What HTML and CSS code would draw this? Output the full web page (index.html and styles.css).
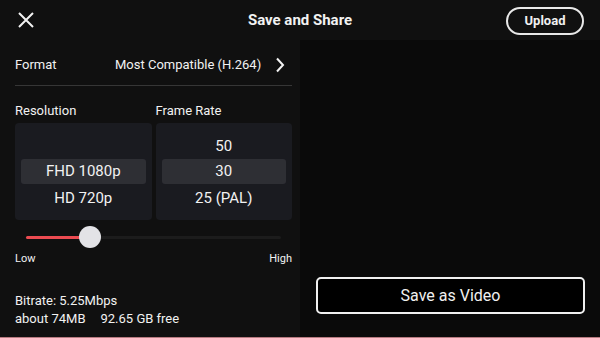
FILE: index.html
```html
<!DOCTYPE html>
<html lang="en">
<head>
    <meta charset="UTF-8">
    <meta name="viewport" content="width=device-width, initial-scale=1.0">
    <title>Save and Share</title>
    <link rel="stylesheet" href="styles.css">
</head>
<body>
    <div class="screen">
        <header class="top-bar">
            <button class="icon-btn" aria-label="Close">
                <svg width="16" height="16" viewBox="0 0 16 16">
                    <path d="M1 1 L15 15 M15 1 L1 15" stroke="#f2f2f2" stroke-width="2" fill="none"/>
                </svg>
            </button>
            <h1 class="title">Save and Share</h1>
            <button class="upload-btn">Upload</button>
        </header>

        <div class="main">
            <section class="settings">
                <div class="format-row">
                    <span class="label">Format</span>
                    <span class="format-value">Most Compatible (H.264)</span>
                    <svg class="chevron" width="10" height="16" viewBox="0 0 10 16">
                        <path d="M2 1.5 L8 8 L2 14.5" stroke="#f2f2f2" stroke-width="2" fill="none"/>
                    </svg>
                </div>

                <div class="pickers">
                    <div class="picker">
                        <div class="picker-label">Resolution</div>
                        <div class="picker-box">
                            <div class="picker-item"></div>
                            <div class="picker-item selected">FHD 1080p</div>
                            <div class="picker-item">HD 720p</div>
                        </div>
                    </div>
                    <div class="picker">
                        <div class="picker-label">Frame Rate</div>
                        <div class="picker-box">
                            <div class="picker-item">50</div>
                            <div class="picker-item selected">30</div>
                            <div class="picker-item">25 (PAL)</div>
                        </div>
                    </div>
                </div>

                <div class="slider">
                    <div class="track">
                        <div class="track-fill" style="width: 25%"></div>
                        <div class="thumb" style="left: 25%"></div>
                    </div>
                    <div class="slider-labels">
                        <span>Low</span>
                        <span>High</span>
                    </div>
                </div>

                <div class="info">
                    <div>Bitrate: 5.25Mbps</div>
                    <div>about 74MB<span class="free">92.65 GB free</span></div>
                </div>
            </section>

            <section class="preview">
                <button class="save-btn">Save as Video</button>
            </section>
        </div>
    </div>
</body>
</html>
```

FILE: styles.css
```css
body {
    margin: 0;
    padding: 0;
    background: #0a0a0a;
    font-family: Roboto, "Liberation Sans", sans-serif;
    color: #f2f2f2;
}
.screen {
    width: 600px;
    height: 338px;
    display: flex;
    flex-direction: column;
    border-bottom: 1px solid #b77a80;
    box-sizing: border-box;
    overflow: hidden;
}
.top-bar {
    height: 40px;
    flex: none;
    background: #101010;
    display: flex;
    align-items: center;
    justify-content: space-between;
    padding: 0 16px 0 18px;
    position: relative;
}
.icon-btn {
    background: none;
    border: none;
    padding: 0;
    width: 16px;
    height: 16px;
    display: flex;
}
.title {
    position: absolute;
    left: 0;
    right: 0;
    text-align: center;
    margin: 0;
    font-size: 15px;
    font-weight: 700;
    pointer-events: none;
}
.upload-btn {
    width: 78px;
    height: 28px;
    margin-top: 1px;
    border: 2px solid #e8e8e8;
    border-radius: 14px;
    background: none;
    color: #f0f0f0;
    font-family: inherit;
    font-size: 13px;
    font-weight: 700;
    padding: 0;
}
.main {
    flex: 1;
    display: flex;
}
.settings {
    width: 300px;
    background: #101010;
    padding: 0 8px 0 15px;
    box-sizing: border-box;
}
.format-row {
    height: 41px;
    padding-top: 4px;
    display: flex;
    align-items: center;
    border-bottom: 1px solid #363636;
    font-size: 13px;
    padding-right: 7px;
}
.label {
    width: 100px;
}
.format-value {
    flex: 1;
}
.chevron {
    margin-top: 1px;
}
.pickers {
    display: flex;
    gap: 4px;
    margin-top: 15px;
}
.picker {
    flex: 1;
}
.picker-label {
    font-size: 13px;
    height: 22px;
    line-height: 20px;
}
.picker-box {
    background: #1a1b20;
    border-radius: 4px;
    height: 97px;
    padding: 10px 6px 0;
    box-sizing: border-box;
}
.picker-item {
    height: 26px;
    line-height: 26px;
    text-align: center;
    font-size: 15px;
    border-radius: 3px;
}
.picker-item.selected {
    background: #2e2f34;
    height: 25px;
    line-height: 25px;
    margin-bottom: 1px;
}
.slider {
    margin-top: 16px;
}
.track {
    position: relative;
    height: 3px;
    margin: 9px 11px 0 11px;
    background: #1c1c1c;
    border-radius: 2px;
}
.track-fill {
    height: 3px;
    background: #ec4b51;
    border-radius: 2px;
}
.thumb {
    position: absolute;
    top: -10px;
    width: 22px;
    height: 22px;
    margin-left: -11px;
    border-radius: 50%;
    background: #e3e3e6;
}
.slider-labels {
    display: flex;
    justify-content: space-between;
    font-size: 11px;
    margin-top: 13px;
}
.info {
    margin-top: 27px;
    font-size: 13px;
    line-height: 18px;
}
.free {
    margin-left: 15px;
}
.preview {
    flex: 1;
    display: flex;
    align-items: flex-end;
    justify-content: center;
    padding-bottom: 23px;
}
.save-btn {
    width: 269px;
    height: 37px;
    border: 2px solid #f0f0f0;
    border-radius: 5px;
    background: #000;
    color: #f0f0f0;
    font-family: inherit;
    font-size: 16px;
    padding: 0;
    margin-left: 1px;
}
```
